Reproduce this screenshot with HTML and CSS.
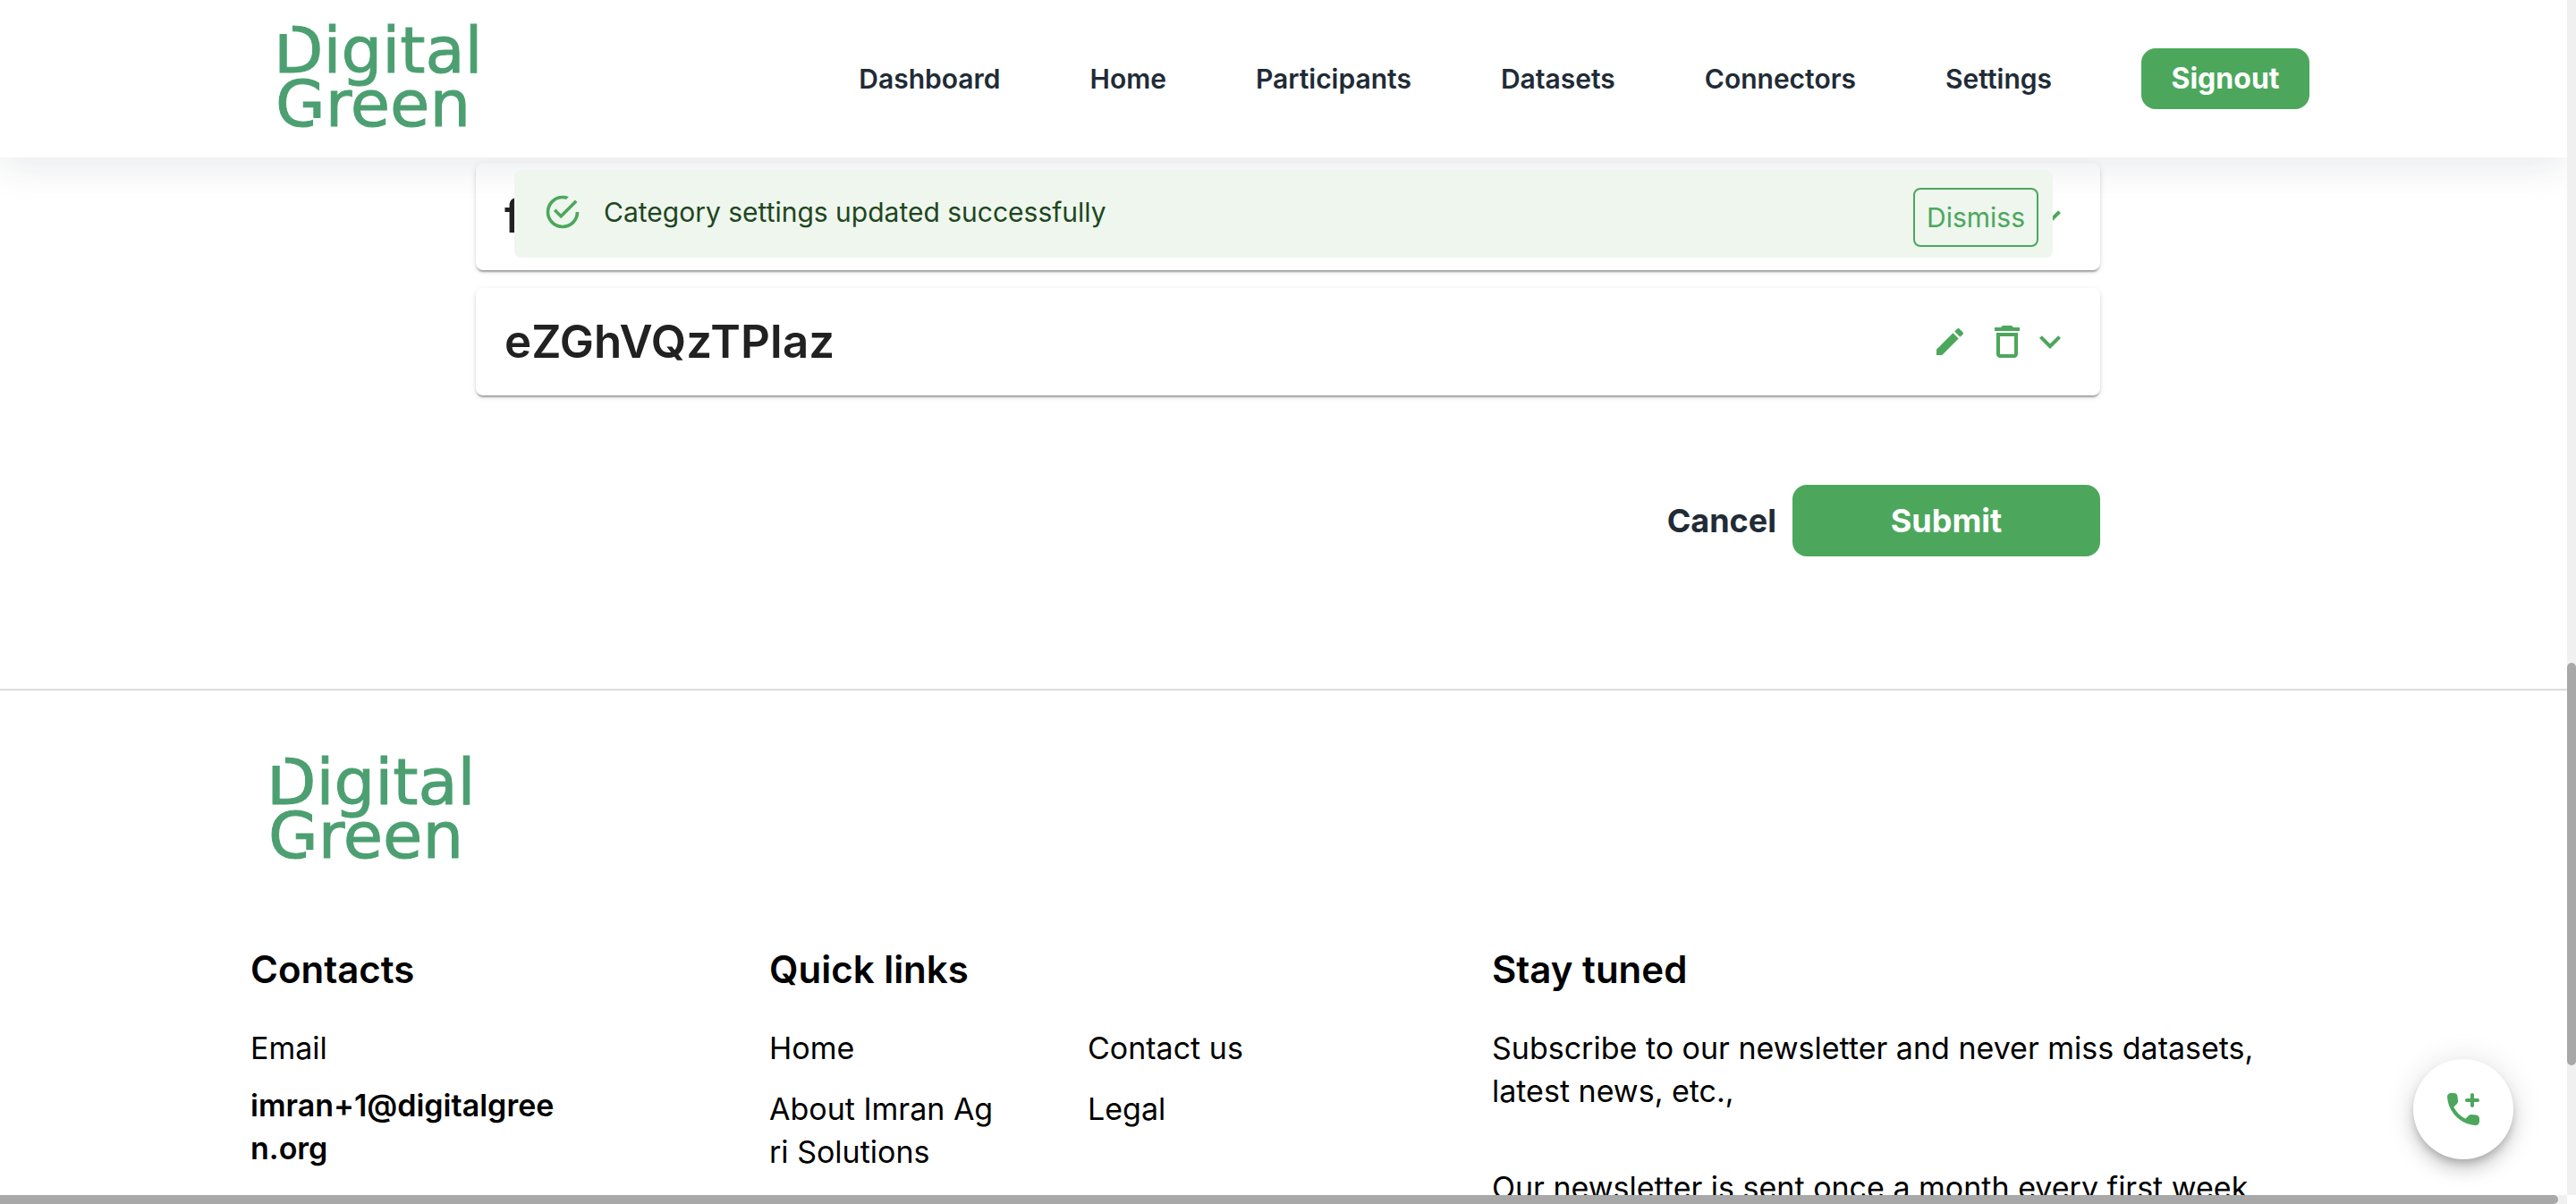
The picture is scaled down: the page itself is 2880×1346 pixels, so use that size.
FILE: index.html
```html
<!DOCTYPE html>
<html lang="en">
<head>
<meta charset="utf-8">
<title>Settings - Digital Green</title>
<link rel="stylesheet" href="styles.css">
</head>
<body>
<header class="header">
  <a class="logo" href="#" aria-label="Digital Green home">
    <svg width="310" height="132" viewBox="0 0 310 132">
      <text class="logo-text" x="-6" y="59">Digital</text>
      <text class="logo-text" x="-4" y="119">Green</text>
      <path class="logo-gap" d="M0 2h15v14H0zM38 110h15v13H38z"/>
    </svg>
  </a>
  <nav class="nav">
    <a href="#">Dashboard</a>
    <a href="#">Home</a>
    <a href="#">Participants</a>
    <a href="#">Datasets</a>
    <a href="#">Connectors</a>
    <a href="#">Settings</a>
    <button class="button signout" type="button">Signout</button>
  </nav>
</header>

<main class="main">
  <section class="category">
    <h2 class="category-name">f</h2>
    <button class="icon-button" type="button" aria-label="Expand category">
      <svg width="48" height="48" viewBox="0 0 24 24"><path d="M16.59 8.59 12 13.17 7.41 8.59 6 10l6 6 6-6z"/></svg>
    </button>
    <div class="alert" role="alert">
      <svg class="alert-icon" width="44" height="44" viewBox="0 0 24 24"><path d="M20,12A8,8 0 0,1 12,20A8,8 0 0,1 4,12A8,8 0 0,1 12,4C12.76,4 13.5,4.11 14.2,4.31L15.77,2.74C14.61,2.26 13.34,2 12,2A10,10 0 0,0 2,12A10,10 0 0,0 12,22A10,10 0 0,0 22,12M7.91,10.08L6.5,11.5L11,16L21,6L19.59,4.58L11,13.17L7.91,10.08Z"/></svg>
      <span class="alert-text">Category settings updated successfully</span>
      <button class="dismiss" type="button">Dismiss</button>
    </div>
  </section>
  <section class="category">
    <h2 class="category-name">eZGhVQzTPIaz</h2>
    <button class="icon-button edit" type="button" aria-label="Edit category">
      <svg width="40" height="40" viewBox="0 0 24 24"><path d="M3 17.25V21h3.75L17.81 9.94l-3.75-3.75L3 17.25zM20.71 7.04c.39-.39.39-1.02 0-1.41l-2.34-2.34a.9959.9959 0 0 0-1.41 0l-1.83 1.83 3.75 3.75 1.83-1.83z"/></svg>
    </button>
    <button class="icon-button" type="button" aria-label="Delete category">
      <svg width="48" height="48" viewBox="0 0 24 24"><path d="M6 19c0 1.100.9 2 2 2h8c1.100 0 2-.9 2-2V7H6v12zM8 9h8v10H8V9zm7.500-5-1-1h-5l-1 1H5v2h14V4z"/></svg>
    </button>
    <button class="icon-button" type="button" aria-label="Expand category">
      <svg width="48" height="48" viewBox="0 0 24 24"><path d="M16.59 8.59 12 13.17 7.41 8.59 6 10l6 6 6-6z"/></svg>
    </button>
  </section>
  <div class="actions">
    <button class="cancel" type="button">Cancel</button>
    <button class="button submit" type="submit">Submit</button>
  </div>
</main>

<footer class="footer">
  <a class="logo" href="#" aria-label="Digital Green home">
    <svg width="310" height="132" viewBox="0 0 310 132">
      <text class="logo-text" x="-6" y="59">Digital</text>
      <text class="logo-text" x="-4" y="119">Green</text>
      <path class="logo-gap" d="M0 2h15v14H0zM38 110h15v13H38z"/>
    </svg>
  </a>
  <div class="footer-columns">
    <section class="footer-column">
      <h3>Contacts</h3>
      <p>Email</p>
      <a class="email" href="mailto:imran+1@digitalgreen.org">imran+1@digitalgreen.org</a>
    </section>
    <section class="footer-column">
      <h3>Quick links</h3>
      <div class="links">
        <a href="#">Home</a>
        <a href="#">Contact us</a>
        <a href="#">About Imran Agri Solutions</a>
        <a href="#">Legal</a>
      </div>
    </section>
    <section class="footer-column">
      <h3>Stay tuned</h3>
      <p>Subscribe to our newsletter and never miss datasets, latest news, etc.,</p>
      <p class="note">Our newsletter is sent once a month every first week</p>
    </section>
  </div>
</footer>

<button class="call" type="button" aria-label="Add call">
  <svg width="48" height="48" viewBox="0 0 24 24"><path d="M19.230 15.260l-2.540-.29c-.61-.07-1.210.14-1.640.57l-1.840 1.840c-2.830-1.440-5.150-3.750-6.590-6.590l1.850-1.850c.43-.43.64-1.030.57-1.640l-.29-2.520A2.001 2.001 0 0 0 6.760 3H5.030c-1.130 0-2.070.94-2 2.070.53 8.540 7.360 15.360 15.890 15.890 1.130.07 2.070-.87 2.070-2v-1.730c.01-1-.76-1.850-1.760-1.970zM13 7c0 .55.45 1 1 1h2v2c0 .55.45 1 1 1s1-.45 1-1V8h2c.55 0 1-.45 1-1s-.45-1-1-1h-2V4c0-.55-.45-1-1-1s-1 .45-1 1v2h-2c-.55 0-1 .45-1 1z"/></svg>
</button>
<div class="scroll-y"><div class="thumb-y"></div></div>
<div class="scroll-x"><div class="thumb-x"></div></div>
</body>
</html>
```
FILE: styles.css
```css
* {
  box-sizing: border-box;
}

body {
  margin: 0;
  padding-right: 10px;
  height: 100vh;
  overflow: hidden;
  background: #fff;
  color: #000;
  font-family: Inter, "Open Sans", sans-serif;
  font-size: 34px;
  line-height: 48px;
}

a {
  color: inherit;
  text-decoration: none;
}

button {
  padding: 0;
  border: 0;
  background: none;
  color: inherit;
  font: inherit;
}

svg {
  display: block;
  fill: #4ca75c;
}

h2,
h3,
p {
  margin: 0;
}

.header {
  position: relative;
  display: flex;
  justify-content: space-between;
  align-items: center;
  height: 176px;
  padding: 0 288px 0 312px;
  box-shadow: 0 10px 40px rgba(41, 51, 78, 0.1);
}

.logo svg {
  overflow: visible;
}

.logo-text {
  fill: #4c9f70;
  stroke: #4c9f70;
  stroke-width: 1px;
  font-family: "DejaVu Sans", sans-serif;
  font-size: 72px;
}

.logo-gap {
  fill: #fff;
}

.nav {
  display: flex;
  align-items: center;
  gap: 100px;
  color: #212b36;
  font-size: 30px;
  font-weight: 600;
}

.button {
  background: #4ca75c;
  color: #fff;
  border-radius: 16px;
  font-weight: 700;
}

.signout {
  width: 188px;
  height: 68px;
  font-size: 32px;
}

.main {
  padding: 6px 522px 148px 532px;
}

.category {
  position: relative;
  display: flex;
  align-items: center;
  height: 120px;
  margin-bottom: 20px;
  padding: 0 32px;
  border-radius: 8px;
  box-shadow: 0 4px 2px -2px rgba(0, 0, 0, 0.2), 0 2px 2px rgba(0, 0, 0, 0.14), 0 2px 6px rgba(0, 0, 0, 0.12);
}

.category-name {
  flex: 1;
  color: #212121;
  font-size: 51px;
  font-weight: 600;
}

.edit {
  margin-right: 20px;
}

.alert {
  position: absolute;
  top: 8px;
  left: 43px;
  right: 53px;
  display: flex;
  align-items: center;
  height: 98px;
  padding: 0 16px 4px 32px;
  border-radius: 8px;
  background: #eef6ee;
  color: #1e4620;
  font-size: 30px;
}

.alert-text {
  flex: 1;
  margin-left: 24px;
}

.dismiss {
  align-self: flex-end;
  width: 140px;
  height: 66px;
  margin-bottom: 8px;
  border: 2px solid #4ca75c;
  border-radius: 8px;
  color: #4ca75c;
}

.actions {
  display: flex;
  justify-content: flex-end;
  gap: 18px;
  margin-top: 100px;
}

.cancel {
  color: #212b36;
  font-size: 36px;
  font-weight: 700;
}

.submit {
  width: 344px;
  height: 80px;
  font-size: 36px;
}

.footer {
  padding: 68px 270px 0 280px;
  border-top: 2px solid #ddd;
}

.footer .logo {
  display: block;
  padding-left: 24px;
}

.footer-columns {
  display: grid;
  grid-template-columns: 580fr 808fr 932fr;
  margin-top: 88px;
}

.footer-column:last-child {
  padding-right: 40px;
}

h3 {
  margin-bottom: 40px;
  font-size: 42px;
  font-weight: 600;
}

.email {
  display: block;
  width: 350px;
  margin-top: 16px;
  font-weight: 600;
  word-break: break-all;
}

.links {
  display: grid;
  grid-template-columns: 256px 260px;
  gap: 20px 100px;
  word-break: break-all;
}

.note {
  margin-top: 60px;
}

.call {
  position: fixed;
  right: 70px;
  bottom: 50px;
  display: grid;
  place-items: center;
  width: 112px;
  height: 112px;
  border-radius: 50%;
  background: #fff;
  box-shadow: 0 6px 10px -2px rgba(0, 0, 0, 0.2), 0 12px 20px rgba(0, 0, 0, 0.14), 0 2px 36px rgba(0, 0, 0, 0.12);
}

.scroll-y {
  position: fixed;
  top: 0;
  right: 0;
  bottom: 10px;
  width: 10px;
  padding-top: 741px;
  background: #f0f0f0;
}

.thumb-y {
  height: 450px;
  border-radius: 5px;
  background: #a8a8a8;
}

.scroll-x {
  position: fixed;
  left: 0;
  right: 10px;
  bottom: 0;
  height: 10px;
  padding-right: 10px;
  background: #f0f0f0;
}

.thumb-x {
  height: 10px;
  border-radius: 0 5px 5px 0;
  background: #a8a8a8;
}
```
